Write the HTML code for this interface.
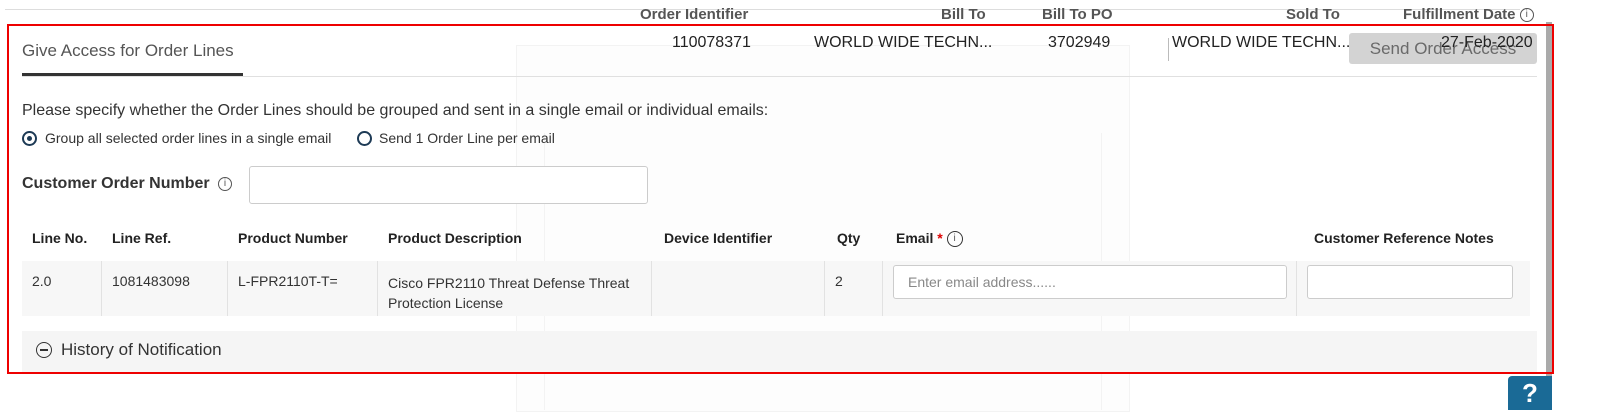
<!DOCTYPE html>
<html><head><meta charset="utf-8"><style>
body{margin:0;width:1616px;height:410px;background:#fff;font-family:"Liberation Sans",sans-serif;position:relative;overflow:hidden;color:#333}
.a{position:absolute;white-space:nowrap}
.h{font-weight:bold;font-size:15px;color:#555;top:6px}
.v{font-size:16px;color:#222;top:34px}
.th{font-weight:bold;font-size:14px;color:#222;top:230px}
.td{font-size:14px;color:#333}
.vl{position:absolute;top:261px;height:55px;width:1px;background:#e2e2e2}
.inp{position:absolute;background:#fff;border:1px solid #ccc;border-radius:3px}
.rad{position:absolute;width:11px;height:11px;border:2px solid #1d3a55;border-radius:50%}
.info{display:inline-block;width:12px;height:12px;border:1px solid #555;border-radius:50%;font-size:10px;line-height:12px;text-align:center;font-weight:normal;vertical-align:middle;color:#555}
</style></head><body>
<div class="a" style="left:5px;top:9px;width:1515px;height:1px;background:#ddd"></div>
<!-- ghost overlay -->
<div class="a" style="left:516px;top:45px;width:612px;height:365px;border:1px solid #f3f3f3;background:rgba(250,250,250,0.35)"></div>
<div class="a" style="left:544px;top:133px;width:556px;height:277px;border-left:1px solid #f3f3f3;border-right:1px solid #f3f3f3"></div>

<div class="a h" style="left:640px">Order Identifier</div>
<div class="a h" style="left:941px">Bill To</div>
<div class="a h" style="left:1042px">Bill To PO</div>
<div class="a h" style="left:1286px">Sold To</div>
<div class="a h" style="left:1403px">Fulfillment Date <span class="info">i</span></div>

<div class="a" style="left:1546px;top:22px;width:6px;height:388px;background:#aaa"></div>
<div class="a" style="left:1349px;top:33px;width:188px;height:31px;background:#d3d3d3;border-radius:3px;color:#6a6a6a;font-size:17px;line-height:31px;text-align:center">Send Order Access</div>
<div class="a" style="left:1168px;top:38px;width:1px;height:23px;background:#bbb"></div>

<div class="a v" style="left:672px">110078371</div>
<div class="a v" style="left:814px">WORLD WIDE TECHN...</div>
<div class="a v" style="left:1048px">3702949</div>
<div class="a v" style="left:1172px">WORLD WIDE TECHN...</div>
<div class="a v" style="left:1441px">27-Feb-2020</div>

<div class="a" style="left:22px;top:41px;font-size:17px;color:#555">Give Access for Order Lines</div>
<div class="a" style="left:22px;top:76px;width:1515px;height:1px;background:#e0e0e0"></div>
<div class="a" style="left:22px;top:73px;width:221px;height:3px;background:#333"></div>

<div class="a" style="left:22px;top:102px;font-size:16px;color:#333">Please specify whether the Order Lines should be grouped and sent in a single email or individual emails:</div>
<div class="rad" style="left:22px;top:131px"><div style="position:absolute;left:3px;top:3px;width:5px;height:5px;border-radius:50%;background:#1d3a55"></div></div>
<div class="a" style="left:45px;top:130px;font-size:14px">Group all selected order lines in a single email</div>
<div class="rad" style="left:357px;top:131px"></div>
<div class="a" style="left:379px;top:130px;font-size:14px">Send 1 Order Line per email</div>

<div class="a" style="left:22px;top:175px;font-size:16px;font-weight:bold;color:#333">Customer Order Number <span class="info" style="margin-left:4px">i</span></div>
<div class="inp" style="left:249px;top:166px;width:397px;height:36px"></div>

<div class="a th" style="left:32px">Line No.</div>
<div class="a th" style="left:112px">Line Ref.</div>
<div class="a th" style="left:238px">Product Number</div>
<div class="a th" style="left:388px">Product Description</div>
<div class="a th" style="left:664px">Device Identifier</div>
<div class="a th" style="left:837px">Qty</div>
<div class="a th" style="left:896px">Email <span style="color:#d00">*</span> <span class="info" style="width:14px;height:14px;line-height:14px;border-color:#333">i</span></div>
<div class="a th" style="left:1314px">Customer Reference Notes</div>

<div class="a" style="left:22px;top:261px;width:1508px;height:55px;background:#f7f7f7"></div>
<div class="vl" style="left:101px"></div><div class="vl" style="left:227px"></div><div class="vl" style="left:377px"></div><div class="vl" style="left:651px"></div><div class="vl" style="left:824px"></div><div class="vl" style="left:882px"></div><div class="vl" style="left:1296px"></div>
<div class="a td" style="left:32px;top:273px">2.0</div>
<div class="a td" style="left:112px;top:273px">1081483098</div>
<div class="a td" style="left:238px;top:273px">L-FPR2110T-T=</div>
<div class="a td" style="left:388px;top:273px;line-height:20px">Cisco FPR2110 Threat Defense Threat<br>Protection License</div>
<div class="a td" style="left:835px;top:273px">2</div>
<div class="inp" style="left:893px;top:265px;width:392px;height:32px"><span style="position:absolute;left:14px;top:8px;font-size:14px;color:#888">Enter email address......</span></div>
<div class="inp" style="left:1307px;top:265px;width:204px;height:32px"></div>

<div class="a" style="left:22px;top:331px;width:1515px;height:42px;background:#f5f5f5"></div>
<div class="a" style="left:36px;top:342px;width:14px;height:14px;border:1.5px solid #333;border-radius:50%"><div style="position:absolute;left:3px;top:6px;width:8px;height:1.5px;background:#333"></div></div>
<div class="a" style="left:61px;top:340px;font-size:17px;color:#333">History of Notification</div>

<div class="a" style="left:7px;top:24px;width:1543px;height:346px;border:2px solid #e00"></div>
<div class="a" style="left:1508px;top:376px;width:44px;height:34px;background:#1a6a96;border-radius:4px 0 0 0;color:#fff;font-size:26px;font-weight:bold;text-align:center;line-height:34px">?</div>
</body></html>
